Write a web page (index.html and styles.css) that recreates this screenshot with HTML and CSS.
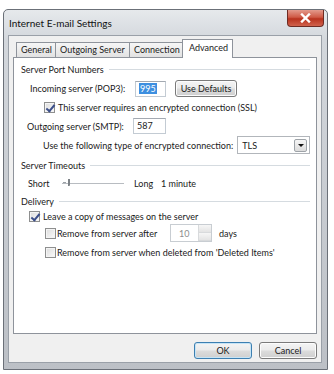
FILE: index.html
```html
<!DOCTYPE html>
<html lang="en">
  <head>
    <meta charset="UTF-8" />
    <title>Internet E-mail Settings</title>
    <link rel="stylesheet" href="styles.css">
  </head>
  <body>
    <div class="window">
      <!-- Title bar -->
      <div class="titlebar">
        <span class="title">Internet E-mail Settings</span>
        <div class="close-btn">
          <svg width="11" height="10" viewBox="0 0 11 10">
            <path d="M2 1.5 L9 8.5 M9 1.5 L2 8.5" stroke="#fff" stroke-width="2.4" stroke-linecap="square" />
          </svg>
        </div>
      </div>

      <div class="client">
        <div class="tabs">
          <div class="tab tab-general">General</div>
          <div class="tab tab-outgoing">Outgoing Server</div>
          <div class="tab tab-connection">Connection</div>
          <div class="tab tab-advanced active">Advanced</div>
        </div>

        <div class="panel">
          <div class="group-head head-ports"><span>Server Port Numbers</span><i></i></div>

          <div class="row row-incoming">
            <span class="lbl lbl-in">Incoming server (POP3):</span>
            <div class="textbox tb-in"><span class="sel">995</span></div>
            <div class="btn btn-defaults">Use Defaults</div>
          </div>

          <div class="row row-ssl">
            <span class="check checked"></span>
            <span>This server requires an encrypted connection (SSL)</span>
          </div>

          <div class="row row-outgoing">
            <span class="lbl lbl-out">Outgoing server (SMTP):</span>
            <div class="textbox tb-out">587</div>
          </div>

          <div class="row row-enc">
            <span class="lbl lbl-enc">Use the following type of encrypted connection:</span>
            <div class="combo">
              <span>TLS</span>
              <div class="combo-btn"><b></b></div>
            </div>
          </div>

          <div class="group-head head-timeouts"><span>Server Timeouts</span><i></i></div>

          <div class="row row-slider">
            <span class="lbl lbl-short">Short</span>
            <div class="slider">
              <div class="track"></div>
              <div class="tick"></div>
              <div class="thumb"></div>
            </div>
            <span class="lbl lbl-long">Long</span>
            <span>1 minute</span>
          </div>

          <div class="group-head head-delivery"><span>Delivery</span><i></i></div>

          <div class="row row-leave">
            <span class="check checked"></span>
            <span>Leave a copy of messages on the server</span>
          </div>

          <div class="row row-remove">
            <span class="check"></span>
            <span class="lbl lbl-remove">Remove from server after</span>
            <div class="spinner">
              <span>10</span>
              <div class="spin-btns"><div></div><div></div></div>
            </div>
            <span>days</span>
          </div>

          <div class="row row-deleted">
            <span class="check"></span>
            <span>Remove from server when deleted from 'Deleted Items'</span>
          </div>
        </div>

        <div class="buttons">
          <div class="btn btn-ok">OK</div>
          <div class="btn btn-cancel">Cancel</div>
        </div>
      </div>
    </div>
  </body>
</html>
```

FILE: styles.css
```css
* {
  margin: 0;
  padding: 0;
  box-sizing: border-box;
}

body {
  background: #fff;
  font-family: "Lato", "Open Sans", sans-serif;
  font-size: 9px;
  color: #1a1a1a;
}

/* Window frame */
.window {
  margin: 9px 0 0 3px;
  width: 325px;
  height: 361px;
  border: 1px solid #6b7078;
  border-radius: 5px 5px 0 0;
  background: linear-gradient(#e6e9ec, #d3d7dc 30px, #bcc0c6);
  padding: 0 5px 6px 4px;
  display: flex;
  flex-direction: column;
}

.titlebar {
  height: 25px;
  display: flex;
  justify-content: space-between;
  align-items: flex-start;
}

.title {
  font-size: 10px;
  margin: 7px 0 0 1px;
  color: #111;
}

.close-btn {
  width: 37px;
  height: 17px;
  margin-right: -2px;
  border: 1px solid #6e2b23;
  border-top: none;
  border-radius: 0 0 4px 4px;
  background: linear-gradient(#e39a8c, #cf5a46 45%, #b8321e 55%, #d0624c);
  display: flex;
  justify-content: center;
  align-items: center;
}

.client {
  flex: 1;
  background: #f0f0f0;
  border: 1px solid #9aa0a8;
  padding: 3px 4px 0 4px;
  display: flex;
  flex-direction: column;
}

/* Tabs */
.tabs {
  display: flex;
  align-items: flex-end;
  height: 18px;
  padding-left: 3px;
  position: relative;
  z-index: 1;
}

.tab {
  height: 15px;
  border: 1px solid #8e939b;
  border-bottom: none;
  border-right: none;
  background: linear-gradient(#f6f6f6, #e2e2e2);
  padding-left: 4px;
  line-height: 14px;
  white-space: nowrap;
  overflow: hidden;
}

.tab-general { width: 39px; }
.tab-outgoing { width: 74px; }
.tab-connection { width: 53px; }

.tab.active {
  width: 51px;
  height: 19px;
  margin-bottom: -1px;
  background: #fff;
  border-right: 1px solid #8e939b;
  padding-left: 6px;
  line-height: 15px;
}

.panel {
  height: 277px;
  background: #fff;
  border: 1px solid #8e939b;
  padding: 4px 6px 0 7px;
}

/* Group headers */
.group-head {
  height: 14px;
  display: flex;
  align-items: center;
  gap: 5px;
}

.group-head i {
  flex: 1;
  height: 1px;
  background: #d5dbe0;
  margin-top: 1px;
}

.head-timeouts,
.head-delivery {
  margin-top: 4px;
}

/* Rows */
.row {
  display: flex;
  align-items: center;
  white-space: nowrap;
}

.lbl { display: inline-block; }

.row-incoming { height: 17px; margin-top: 4px; padding-left: 9px; }
.lbl-in { width: 105px; }

.row-ssl { height: 14px; margin-top: 3px; padding-left: 23px; gap: 3px; }

.row-outgoing { height: 16px; margin-top: 4px; padding-left: 6px; }
.lbl-out { width: 106px; }

.row-enc { height: 18px; margin-top: 2px; padding-left: 22px; }
.lbl-enc { width: 195px; }

.row-slider { height: 14px; margin-top: 4px; padding-left: 7px; }
.lbl-short { width: 34px; }
.lbl-long { width: 27px; }

.row-leave { height: 14px; margin-top: 1px; padding-left: 8px; gap: 3px; }

.row-remove { height: 18px; margin-top: 1px; padding-left: 24px; }
.row-remove .check { margin-right: 1px; }
.lbl-remove { width: 113px; }

.row-deleted { height: 14px; margin-top: 3px; padding-left: 24px; gap: 1px; }

/* Controls */
.textbox {
  height: 16px;
  border: 1px solid #c3cbd3;
  border-top-color: #a3a9b1;
  background: #fff;
  padding-left: 3px;
  line-height: 14px;
}

.tb-in { width: 31px; }
.tb-out { width: 33px; }

.sel {
  background: #3d8fe0;
  color: #fff;
  padding: 0 1px;
}

.btn {
  border: 1px solid #7a7a7a;
  border-radius: 3px;
  background: linear-gradient(#f4f4f4, #ebebeb 48%, #dcdcdc 52%, #cfcfcf);
  display: flex;
  justify-content: center;
  align-items: center;
  box-shadow: inset 0 0 0 1px #fcfcfc;
}

.btn-defaults {
  width: 62px;
  height: 17px;
  margin-left: 9px;
}

.check {
  width: 11px;
  height: 11px;
  border: 1px solid #8e8f8f;
  background: linear-gradient(135deg, #dcdcdc, #fbfbfb);
  box-shadow: inset 0 0 0 1px #f4f4f4;
  display: inline-block;
  position: relative;
}

.check.checked::after {
  content: "";
  position: absolute;
  left: 3px;
  top: 0;
  width: 3px;
  height: 7px;
  border: solid #3c4f8a;
  border-width: 0 2px 2px 0;
  transform: rotate(40deg);
}

.combo {
  width: 73px;
  height: 18px;
  border: 1px solid #b2b6bb;
  background: #fff;
  display: flex;
  align-items: center;
  justify-content: space-between;
  padding: 0 2px 0 4px;
}

.combo-btn {
  width: 13px;
  height: 13px;
  border: 1px solid #9ea3a8;
  border-radius: 2px;
  background: linear-gradient(#f5f5f5, #dcdcdc);
  display: flex;
  justify-content: center;
  align-items: center;
}

.combo-btn b {
  width: 0;
  height: 0;
  border-left: 3px solid transparent;
  border-right: 3px solid transparent;
  border-top: 3px solid #111;
}

.slider {
  width: 62px;
  height: 14px;
  margin-right: 10px;
  position: relative;
}

.track {
  position: absolute;
  left: 0;
  right: 0;
  top: 7px;
  height: 1px;
  background: #b8bcc1;
}

.tick {
  position: absolute;
  left: 1px;
  top: 6px;
  width: 3px;
  height: 1px;
  background: #9aa0a6;
}

.thumb {
  position: absolute;
  left: 6px;
  top: 3px;
  width: 2px;
  height: 7px;
  background: #7d8287;
  border-radius: 0 0 1px 0;
}

.spinner {
  width: 42px;
  height: 18px;
  border: 1px solid #c8cdd2;
  background: #fff;
  display: flex;
  align-items: center;
  justify-content: space-between;
  padding-left: 8px;
  color: #8d8d8d;
  margin-right: 7px;
}

.spin-btns {
  width: 13px;
  height: 16px;
  display: flex;
  flex-direction: column;
  border-left: 1px solid #d8dadc;
}

.spin-btns div {
  flex: 1;
  background: linear-gradient(#f6f6f6, #e4e4e4);
  border-bottom: 1px solid #d8dadc;
}

/* Dialog buttons */
.buttons {
  display: flex;
  justify-content: flex-end;
  gap: 7px;
  margin-top: 8px;
  padding-right: 0;
}

.btn-ok,
.btn-cancel {
  width: 58px;
  height: 17px;
}

.btn-ok {
  border-color: #3c7fb1;
  box-shadow: inset 0 0 0 1px #c6e4f6;
}
```
